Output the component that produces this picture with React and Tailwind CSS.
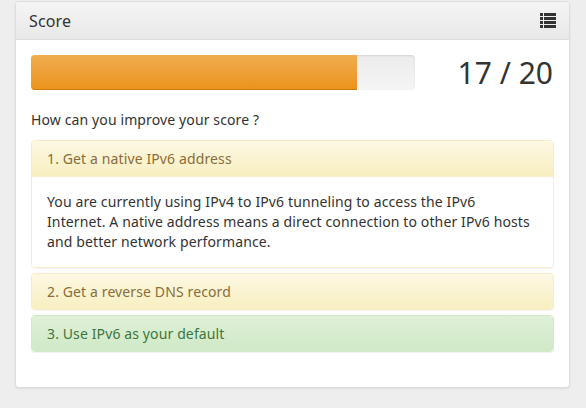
import React from "react";

function ListIcon() {
  return (
    <svg width="16" height="15" viewBox="0 0 16 15" className="block">
      {[0, 4, 8, 12].map((y) => (
        <g key={y} fill="#333">
          <rect x="0" y={y} width="3" height="3" />
          <rect x="4" y={y} width="12" height="3" />
        </g>
      ))}
    </svg>
  );
}

export default function App() {
  return (
    <div
      className="w-[586px] h-[408px] bg-[#eeeeee] pt-[1px] pl-[15px] text-[#333] text-[14px] tracking-[0.12px]"
      style={{ fontFamily: '"Noto Sans", "Open Sans", sans-serif' }}
    >
      <div className="w-[555px] h-[387px] bg-white border border-[#dddddd] rounded-[4px] shadow-[0_1px_2px_rgba(0,0,0,0.08)] overflow-hidden">
        <div className="h-[38px] flex items-center justify-between px-[13px] border-b border-[#dddddd] bg-gradient-to-b from-[#f5f5f5] to-[#e8e8e8]">
          <span className="text-[16px] leading-none">Score</span>
          <ListIcon />
        </div>
        <div className="px-[15px] pt-[15px]">
          <div className="flex items-center justify-between h-[35px]">
            <div className="w-[384px] h-[35px] rounded-[4px] bg-gradient-to-b from-[#ebebeb] to-[#f5f5f5] shadow-[inset_0_1px_2px_rgba(0,0,0,0.1)] overflow-hidden">
              <div className="h-full w-[85%] bg-gradient-to-b from-[#f0ad4e] to-[#eb9316] shadow-[inset_0_-1px_0_rgba(0,0,0,0.15)]" />
            </div>
            <div className="text-[30px] leading-none pr-[1px] text-[#333] tracking-normal">17 / 20</div>
          </div>
          <div className="mt-[20px] h-[20px] leading-[20px]">How can you improve your score ?</div>
          <div className="mt-[10px] flex flex-col gap-[5px]">
            <div className="rounded-[4px] border border-[#faebcc] shadow-[0_1px_1px_rgba(0,0,0,0.05)] overflow-hidden">
              <div className="h-[36px] flex items-center px-[15px] text-[#8a6d3b] bg-gradient-to-b from-[#fcf8e3] to-[#f8efc0] border-b border-[#faebcc]">
                1. Get a native IPv6 address
              </div>
              <div className="p-[15px] bg-white">
                <p className="w-[488px] leading-[20px]">
                  You are currently using IPv4 to IPv6 tunneling to access the IPv6 Internet. A native address means a direct connection to other IPv6 hosts and better network performance.
                </p>
              </div>
            </div>
            <div className="rounded-[4px] border border-[#faebcc] shadow-[0_1px_1px_rgba(0,0,0,0.05)] overflow-hidden">
              <div className="h-[35px] flex items-center px-[15px] text-[#8a6d3b] bg-gradient-to-b from-[#fcf8e3] to-[#f8efc0]">
                2. Get a reverse DNS record
              </div>
            </div>
            <div className="rounded-[4px] border border-[#d6e9c6] shadow-[0_1px_1px_rgba(0,0,0,0.05)] overflow-hidden">
              <div className="h-[35px] flex items-center px-[15px] text-[#3c763d] bg-gradient-to-b from-[#dff0d8] to-[#d0e9c6]">
                3. Use IPv6 as your default
              </div>
            </div>
          </div>
        </div>
      </div>
    </div>
  );
}
